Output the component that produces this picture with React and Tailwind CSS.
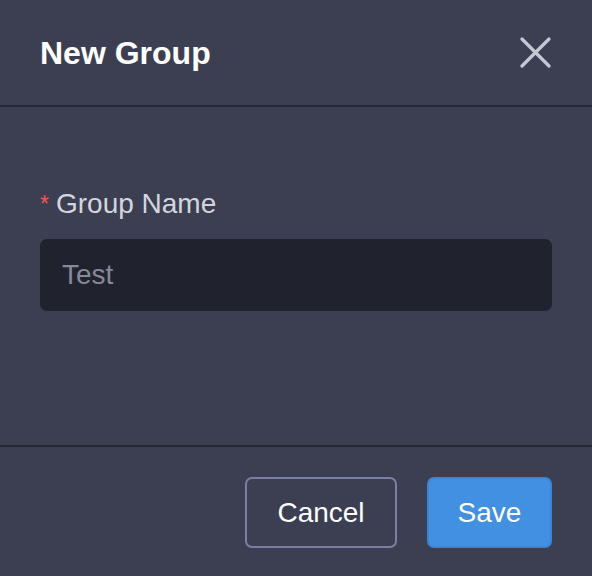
export default function App() {
  return (
    <div
      className="w-[592px] h-[576px] bg-[#3b3f51] flex flex-col overflow-hidden"
      style={{fontFamily: '"Liberation Sans", Arial, sans-serif'}}>
      {/* Header */}
      <div className="h-[105px] shrink-0 flex items-center justify-between pl-10 pr-[40px]">
        <h1 className="text-[32px] font-bold text-white leading-none">New Group</h1>
        <button className="w-[34px] h-[34px] flex items-center justify-center text-[#c3c8d3]">
          <svg width="32" height="32" viewBox="0 0 32 32" fill="none">
            <path d="M3 2 L30 29 M30 2 L3 29" stroke="currentColor" strokeWidth="3.2" strokeLinecap="round" />
          </svg>
        </button>
      </div>

      {/* Body */}
      <div className="h-[342px] shrink-0 border-y-2 border-[#262833] px-10 pt-[81px]">
        <label className="flex items-start h-[32px] leading-[32px] text-[28px] text-[#d3d6de]">
          <span className="text-[#ef5a4f] text-[23px] leading-none mt-[5px] mr-[7px]">*</span>
          Group Name
        </label>
        <input
          className="mt-[19px] w-full h-[72px] rounded-[7px] bg-[#20222d] pl-[22px] text-[28px] text-[#d3d6de] placeholder:text-[#868999] outline-none"
          placeholder="Test"
        />
      </div>

      {/* Footer */}
      <div className="flex-1 flex justify-end gap-[30px] px-10 pt-[30px]">
        <button className="w-[152px] h-[71px] rounded-[7px] border-2 border-[#7a7fa6] text-[28px] text-white">
          Cancel
        </button>
        <button className="w-[125px] h-[71px] rounded-[7px] border-2 border-[#3b84d6] bg-[#4190e2] text-[28px] text-white">
          Save
        </button>
      </div>
    </div>
  );
}
